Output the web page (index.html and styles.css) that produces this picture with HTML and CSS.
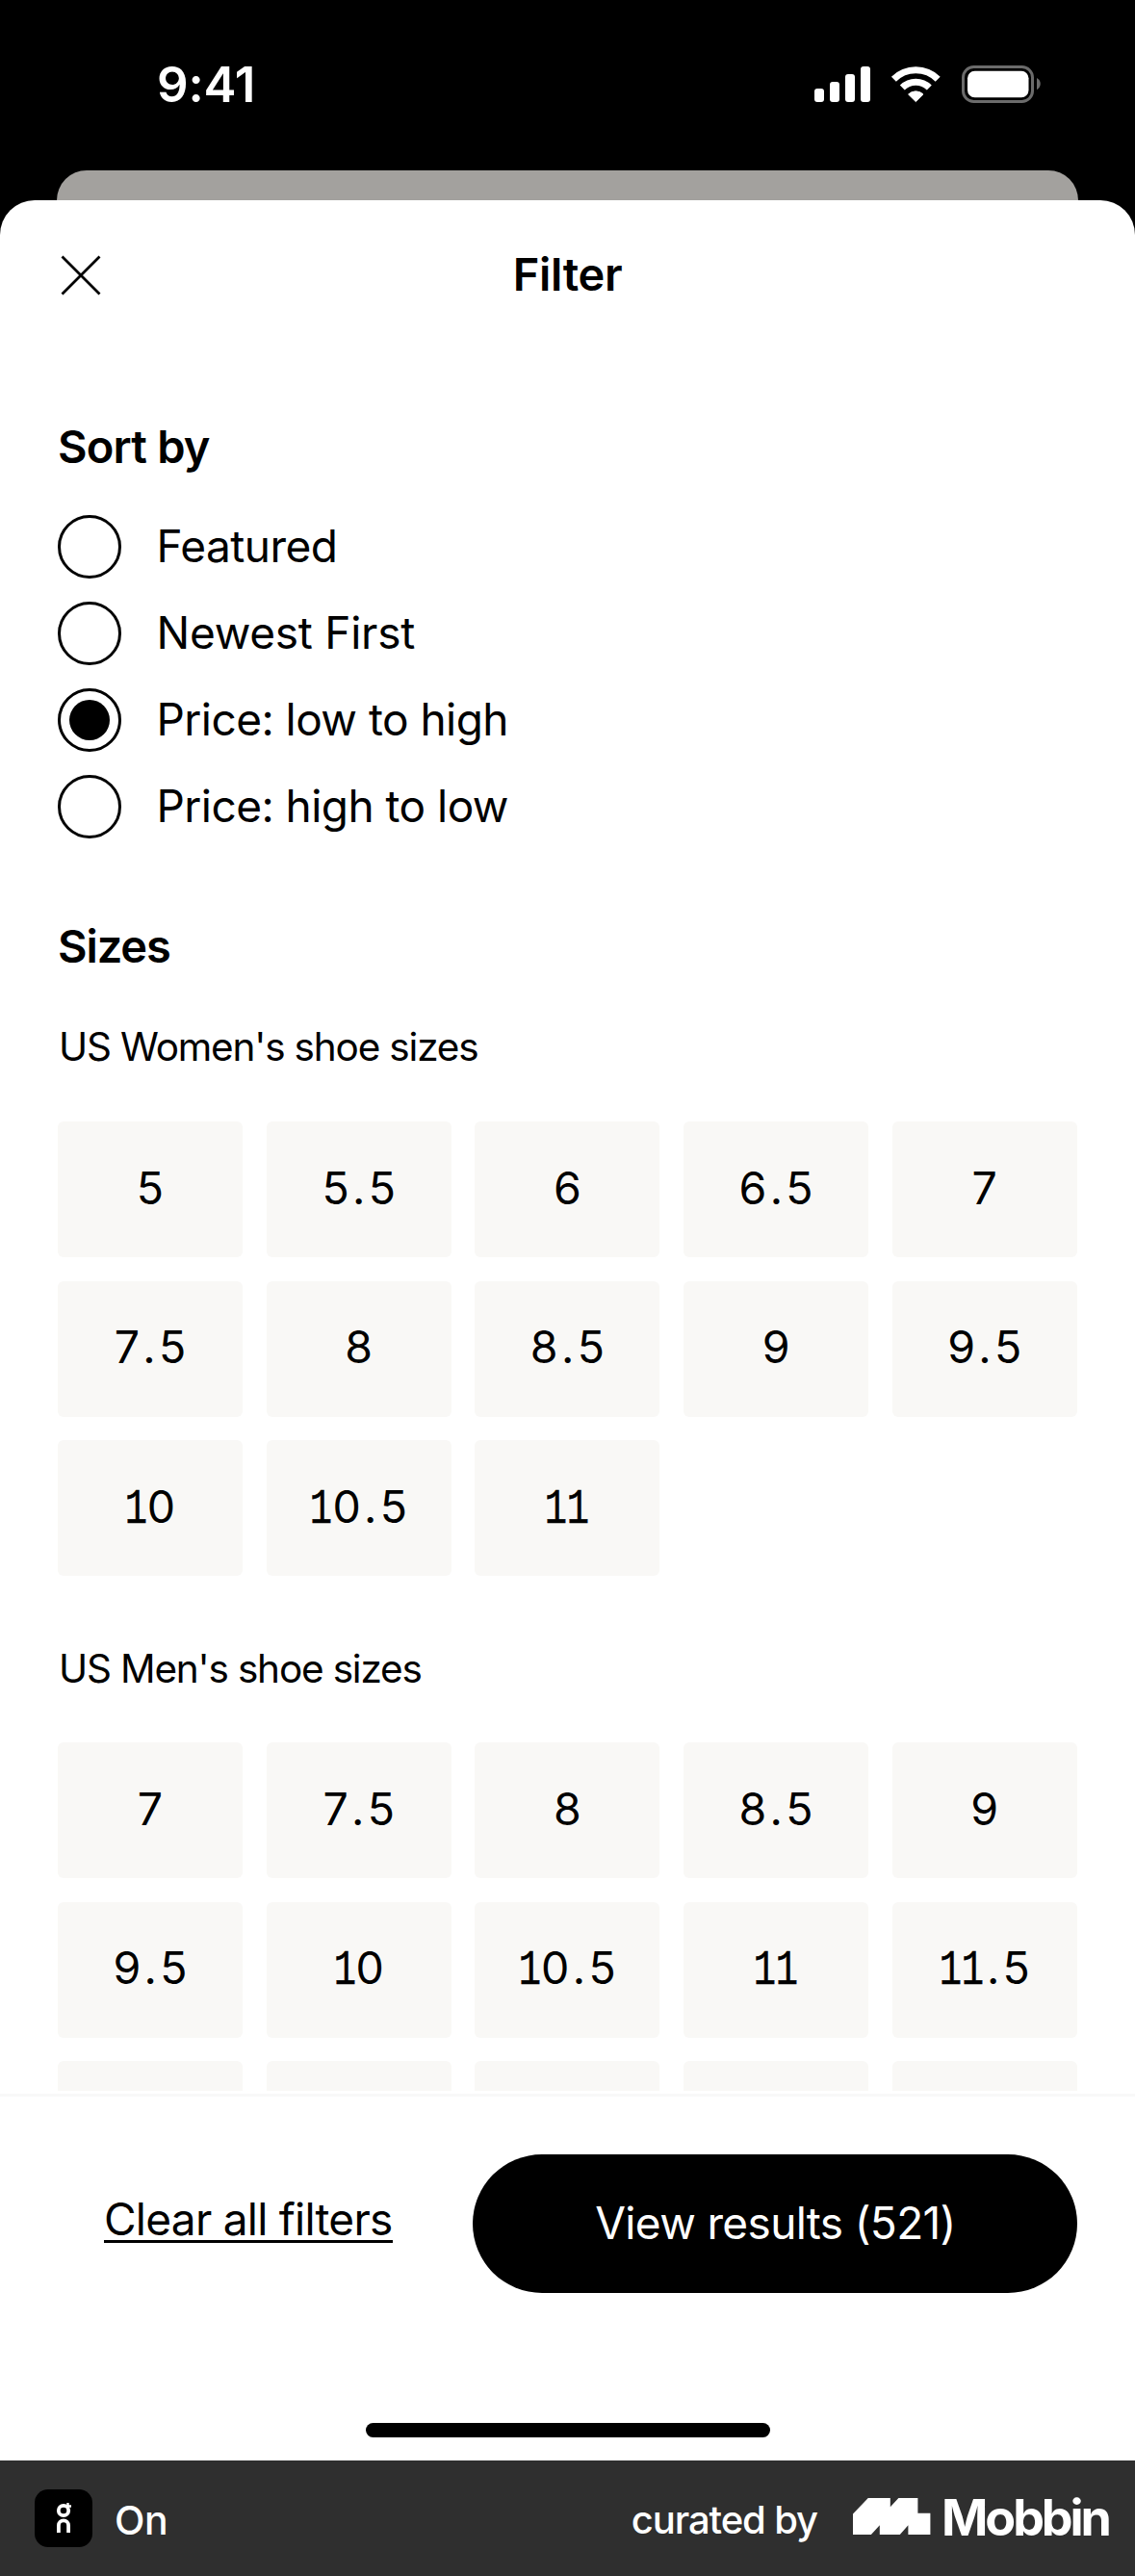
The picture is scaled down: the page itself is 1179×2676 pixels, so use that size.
FILE: index.html
```html
<!DOCTYPE html>
<html lang="en">
<head>
<meta charset="utf-8">
<title>Filter</title>
<link rel="stylesheet" href="styles.css">
</head>
<body>
<div class="status-bar">
  <span class="time">9:41</span>
  <svg class="status-icons" viewBox="0 0 237 40" width="237" height="40" aria-hidden="true">
    <g fill="#fff">
      <rect x="2" y="24" width="10" height="14" rx="3"/>
      <rect x="18" y="17" width="10" height="21" rx="3"/>
      <rect x="34" y="9" width="10" height="29" rx="3"/>
      <rect x="50" y="1" width="10" height="37" rx="3"/>
      <path d="M107.3 37.6 L99.6 30 A11 11 0 0 1 115 30 Z" stroke="#fff" stroke-width="1" stroke-linejoin="round"/>
      <rect x="161" y="5.700" width="63.500" height="27.500" rx="7.500"/>
    </g>
    <g fill="none" stroke="#fff" stroke-width="7">
      <path d="M93.300 23 A19.800 19.800 0 0 1 121.300 23"/>
      <path d="M84.400 14.200 A32.400 32.400 0 0 1 130.200 14.200"/>
    </g>
    <rect x="156.500" y="1.500" width="72" height="36" rx="11" fill="none" stroke="#6b6b6b" stroke-width="3"/>
    <path d="M233 13 C238 15.500 238 22.500 233 25.300 Z" fill="#6b6b6b"/>
  </svg>
</div>
<div class="sheet-behind"></div>
<main class="sheet">
  <header class="sheet-header">
    <svg class="close" viewBox="0 0 42 42" width="42" height="42" aria-label="Close"><path d="M1.500 1.500 L40.500 40.500 M40.500 1.500 L1.500 40.500" stroke="#000" stroke-width="2.800"/></svg>
    <h1 class="title">Filter</h1>
  </header>
  <div class="content">
    <h2 class="heading heading-sort">Sort by</h2>
    <ul class="options">
      <li class="option"><span class="radio"></span><span class="label">Featured</span></li>
      <li class="option"><span class="radio"></span><span class="label label-wide">Newest First</span></li>
      <li class="option"><span class="radio checked"></span><span class="label">Price: low to high</span></li>
      <li class="option"><span class="radio"></span><span class="label">Price: high to low</span></li>
    </ul>
    <h2 class="heading heading-sizes">Sizes</h2>
    <h3 class="subheading">US Women's shoe sizes</h3>
    <div class="grid">
      <div class="size">5</div><div class="size">5<i>.</i>5</div><div class="size">6</div><div class="size">6<i>.</i>5</div><div class="size">7</div>
      <div class="size">7<i>.</i>5</div><div class="size">8</div><div class="size">8<i>.</i>5</div><div class="size">9</div><div class="size">9<i>.</i>5</div>
      <div class="size"><b>1</b>0</div><div class="size"><b>1</b>0<i>.</i>5</div><div class="size"><b>1</b><b>1</b></div>
    </div>
    <h3 class="subheading subheading-men">US Men's shoe sizes</h3>
    <div class="grid">
      <div class="size">7</div><div class="size">7<i>.</i>5</div><div class="size">8</div><div class="size">8<i>.</i>5</div><div class="size">9</div>
      <div class="size">9<i>.</i>5</div><div class="size"><b>1</b>0</div><div class="size"><b>1</b>0<i>.</i>5</div><div class="size"><b>1</b><b>1</b></div><div class="size"><b>1</b><b>1</b><i>.</i>5</div>
      <div class="size"></div><div class="size"></div><div class="size"></div><div class="size"></div><div class="size"></div>
    </div>
  </div>
  <footer class="actions">
    <div class="clear-cell"><a class="clear">Clear all filters</a></div>
    <div class="results"><span class="results-text">View results (521)</span></div>
  </footer>
  <div class="home-indicator"></div>
</main>
<div class="credit">
  <svg class="app-icon" viewBox="0 0 60 60" width="60" height="60" aria-hidden="true">
    <rect width="60" height="60" rx="14" fill="#000"/>
    <g fill="none" stroke="#fff" stroke-width="3.800">
      <circle cx="30" cy="22" r="5.200"/>
      <path d="M33.500 18.500 L35.600 16.400" stroke-width="3"/>
      <path d="M34.500 14 V17.500 H38" stroke-width="2.400"/>
      <path d="M24.900 45 V37.500 A5.100 5.100 0 0 1 35.100 37.500 V45"/>
    </g>
  </svg>
  <span class="app-name">On</span>
  <span class="curated">curated by</span>
  <svg class="mobbin-mark" viewBox="0 0 81 38" width="81" height="38" aria-hidden="true"><path fill="#fff" d="M0 16.500 L15.800 0 H38.800 V9.300 L47.400 0 H67.400 V15.700 H80.400 V38 H57.400 V28.300 L48.800 38 H27.800 V28.300 L18.900 38 H0 Z"/></svg>
  <span class="mobbin">Mobbin</span>
</div>
</body>
</html>
```
FILE: styles.css
```css
* { box-sizing: border-box; margin: 0; padding: 0; }
body {
  width: 1179px;
  height: 2676px;
  overflow: hidden;
  background: #000;
  color: #000;
  font-family: Inter, "Liberation Sans", sans-serif;
  display: flex;
  flex-direction: column;
}
.status-bar {
  height: 177px;
  flex: none;
  display: flex;
  justify-content: space-between;
  align-items: flex-start;
  padding: 57px 98px 0 163px;
  color: #fff;
}
.time { font-size: 51px; font-weight: 600; line-height: 61px; letter-spacing: -0.2px; }
.status-icons { margin-top: 11px; }
.sheet-behind {
  flex: none;
  height: 31px;
  margin: 0 59px;
  background: #a3a19e;
  border-radius: 32px 32px 0 0;
}
.sheet {
  flex: none;
  height: 2348px;
  background: #fff;
  border-radius: 36px 36px 0 0;
  display: flex;
  flex-direction: column;
}
.sheet-header {
  height: 154px;
  flex: none;
  display: grid;
  grid-template-columns: 1fr auto 1fr;
  align-items: center;
  padding: 0 60px;
}
.close { margin: 2px 0 0 3px; }
.title { font-size: 47px; font-weight: 600; line-height: 60px; letter-spacing: -0.3px; }
.content { flex: none; height: 1810px; overflow: hidden; padding: 72px 59px 0 60px; }
.heading { font-size: 47px; font-weight: 600; line-height: 60px; letter-spacing: -0.8px; }
.heading-sizes { margin-top: 82px; letter-spacing: -1.1px; }
.options { list-style: none; margin-top: 41px; display: flex; flex-direction: column; gap: 24px; }
.option { height: 66px; display: flex; align-items: center; gap: 36.5px; }
.radio {
  width: 66px; height: 66px;
  border: 3px solid #000;
  border-radius: 50%;
  display: flex; align-items: center; justify-content: center;
}
.checked::after { content: ""; width: 42px; height: 42px; border-radius: 50%; background: #000; }
.label { font-size: 46px; line-height: 60px; padding-bottom: 3px; letter-spacing: -0.54px; }
.label-wide { letter-spacing: -0.25px; }
.subheading { font-size: 40.5px; font-weight: 400; line-height: 50px; margin: 50px 0 52px; padding-left: 1px; letter-spacing: -1.18px; }
.subheading-men { margin: 72px 0 51px; }
.grid { display: grid; grid-template-columns: repeat(5, 192px); column-gap: 24.7px; row-gap: 24.5px; }
.size {
  height: 141px;
  background: #f9f8f6;
  border-radius: 6px;
  display: flex; align-items: baseline; justify-content: center;
  font-size: 46.5px;
  line-height: 60px;
  padding: 38.5px 0 0 0;
}
/* Zero-width strut: keeps one shared baseline in every tile */
.size::before { content: "\200b"; width: 0; }
.size i { font-style: normal; width: 20px; text-align: center; }
/* Slab-footed figure one, narrowed to sit tight against its neighbours */
.size b {
  display: flex;
  justify-content: center;
  width: 23px;
  line-height: 40px;
  font-family: "Liberation Mono", monospace;
  font-weight: 400;
  font-size: 51px;
  -webkit-text-stroke: 0.6px #000;
  transform: scaleX(0.76);
}
.actions {
  flex: none;
  margin-top: 3px;
  border-top: 3px solid #f8f8f8;
  padding: 60px 60px 0;
  display: flex;
  justify-content: space-between;
}
.clear-cell { flex: 1; display: flex; padding: 38px 0 0 48px; }
.clear { font-size: 46px; line-height: 58px; height: 54px; border-bottom: 3px solid #000; white-space: nowrap; letter-spacing: -0.74px; }
.results {
  width: 628px; height: 144px;
  border-radius: 72px;
  background: #000; color: #fff;
  display: flex; align-items: center; justify-content: center;
  font-size: 46px;
  letter-spacing: -0.65px;
  padding: 0 0 3px 1px;
}
.home-indicator { width: 420px; height: 15px; border-radius: 8px; background: #000; margin: 135px auto 0; }
.credit {
  flex: none;
  height: 120px;
  background: #2f2f2f;
  color: #fff;
  display: flex;
  align-items: center;
  padding: 0 26px 0 36px;
}
.app-name { font-size: 41px; font-weight: 500; letter-spacing: -0.5px; margin-left: 23px; padding-top: 3px; }
.curated { font-size: 40px; font-weight: 500; margin-left: auto; letter-spacing: -1.1px; padding-top: 3px; }
.mobbin-mark { margin: 0 11px 4px 37px; }
.mobbin { font-size: 52px; font-weight: 700; letter-spacing: -3.1px; padding-bottom: 1px; width: 175px; }
```
